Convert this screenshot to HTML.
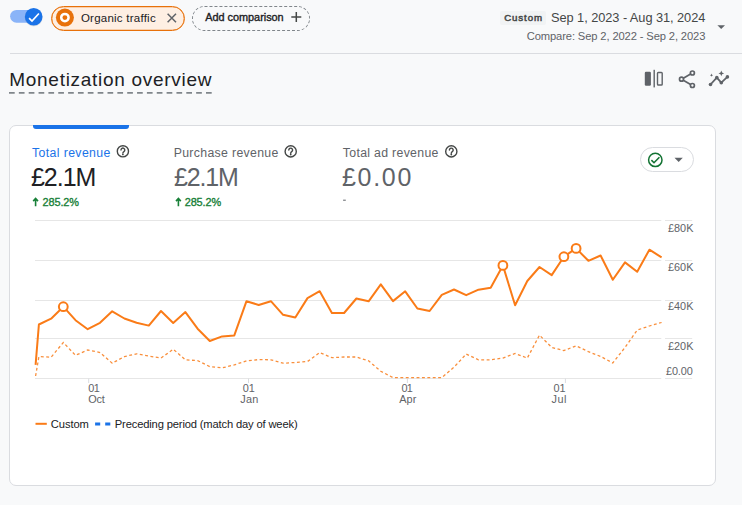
<!DOCTYPE html>
<html><head><meta charset="utf-8"><title>Monetization overview</title>
<style>
html,body{margin:0;padding:0}
body{width:742px;height:505px;overflow:hidden;position:relative;background:#f8f9fa;font-family:"Liberation Sans",sans-serif}
.t{position:absolute;white-space:nowrap;line-height:1;display:block}
.ov{position:absolute;left:0;top:0}
.chip{position:absolute;left:51px;top:6px;width:134px;height:25px;border:1px solid #e8710a;border-radius:13px;background:#feefe3;box-sizing:border-box;box-shadow:inset 0 0 0 .3px #e8710a}
.add{position:absolute;left:192px;top:6px;width:118px;height:25px;border:1px dashed #80868b;border-radius:13px;box-sizing:border-box}
.cus{position:absolute;left:500px;top:10.9px;width:46px;height:14px;background:#f1f3f4;border-radius:2px}
.hr{position:absolute;left:10px;top:53px;width:732px;height:1px;background:#dadce0}
.card{position:absolute;left:9px;top:125px;width:705px;height:359px;border:1px solid #dadce0;border-radius:7px;background:#fff}
.tab{position:absolute;left:32.7px;top:125.2px;width:96.7px;height:3.7px;background:#1a73e8;border-radius:0 0 3px 3px}
.pill{position:absolute;left:640px;top:147px;width:54px;height:25px;border:1px solid #dadce0;border-radius:13px;background:#fff;box-sizing:border-box}
</style></head><body>
<div class="chip"></div>
<div class="add"></div>
<div class="cus"></div>
<div class="hr"></div>
<div class="card"></div>
<div class="tab"></div>
<div class="pill"></div>
<svg class="ov" width="742" height="505" viewBox="0 0 742 505">
<!-- toggle -->
<rect x="10.1" y="9.9" width="30" height="12.8" rx="6.4" fill="#8ab4f8"/>
<circle cx="33.7" cy="17.4" r="9" fill="#000" opacity=".10"/>
<circle cx="33.7" cy="16.8" r="8.8" fill="#1a73e8"/>
<path d="M29.1 18.1L32 21.1L38.9 13.5" fill="none" stroke="#fff" stroke-width="1.7"/>
<!-- chip icon -->
<circle cx="64.9" cy="17.6" r="9" fill="#e8710a"/>
<circle cx="64.9" cy="17.6" r="3.7" fill="none" stroke="#fff" stroke-width="2.5"/>
<path d="M167.6 13.8L176 22.2M176 13.8L167.6 22.2" stroke="#5f6368" stroke-width="1.5" fill="none"/>
<!-- plus -->
<path d="M291.3 16.9H301.3M296.3 11.9V21.9" stroke="#444746" stroke-width="1.5" fill="none"/>
<!-- date dropdown -->
<path d="M717.4 25.2H725L721.2 29z" fill="#5f6368"/>
<!-- title underline -->
<path d="M9 92.9H211.7" stroke="#80868b" stroke-width="1.8" stroke-dasharray="5.7 4.15" fill="none"/>
<!-- compare icon -->
<rect x="644.8" y="71.8" width="6.1" height="13.9" rx="1.2" fill="#5f6368"/>
<rect x="653.5" y="69.8" width="1.4" height="17.6" fill="#5f6368"/>
<rect x="657.5" y="72.5" width="4.7" height="12.5" rx=".8" fill="none" stroke="#5f6368" stroke-width="1.4"/>
<!-- share icon -->
<g stroke="#5f6368" stroke-width="1.7" fill="none">
<path d="M683.3 78.2L690.6 74M683.3 80.2L690.6 84.4"/>
<circle cx="692.4" cy="73" r="2"/><circle cx="681.5" cy="79.2" r="2"/><circle cx="692.4" cy="85.5" r="2"/>
</g>
<!-- insights icon -->
<g stroke="#5f6368" stroke-width="1.8" fill="none" stroke-linejoin="round">
<path d="M710.5 84.5L716.8 77.6L721.3 82.7L727.4 76.9"/>
</g>
<g fill="#5f6368">
<circle cx="710.5" cy="84.5" r="1.8"/><circle cx="716.8" cy="77.6" r="1.8"/><circle cx="721.3" cy="82.7" r="1.8"/><circle cx="727.4" cy="76.9" r="1.8"/>
<path d="M721.3 70.6l.8 2 2 .8-2 .8-.8 2-.8-2-2-.8 2-.8z"/>
<path d="M711.5 73.6l.5 1.1 1.1.5-1.1.5-.5 1.1-.5-1.1-1.1-.5 1.1-.5z"/>
</g>
<!-- help icons -->
<g stroke="#444746" fill="none" stroke-width="1.4" stroke-linecap="round"><circle cx="122.9" cy="151.3" r="5.6"/><path d="M121.0 150.0a1.9 1.9 0 1 1 2.9 1.6q-1 .6-1 1.5"/></g><circle cx="122.9" cy="154.4" r=".9" fill="#444746"/>
<g stroke="#444746" fill="none" stroke-width="1.4" stroke-linecap="round"><circle cx="290.7" cy="151.4" r="5.6"/><path d="M288.8 150.1a1.9 1.9 0 1 1 2.9 1.6q-1 .6-1 1.5"/></g><circle cx="290.7" cy="154.5" r=".9" fill="#444746"/>
<g stroke="#444746" fill="none" stroke-width="1.4" stroke-linecap="round"><circle cx="451.3" cy="151.4" r="5.6"/><path d="M449.40000000000003 150.1a1.9 1.9 0 1 1 2.9 1.6q-1 .6-1 1.5"/></g><circle cx="451.3" cy="154.5" r=".9" fill="#444746"/>
<path d="M35.6 206.2V198.6M33.2 201.1L35.6 198.5L38.0 201.1" stroke="#188038" stroke-width="1.6" fill="none"/>
<path d="M178.4 206.2V198.6M176.0 201.1L178.4 198.5L180.8 201.1" stroke="#188038" stroke-width="1.6" fill="none"/>
<path d="M343.1 200.2H345.8" stroke="#5f6368" stroke-width="1"/>
<!-- status pill -->
<circle cx="655.3" cy="159.9" r="6.7" fill="none" stroke="#137333" stroke-width="1.5"/>
<path d="M651.4 160.1L654 162.7L659.4 157.2" fill="none" stroke="#137333" stroke-width="1.6"/>
<path d="M674.5 157.8H682.8L678.65 162z" fill="#5f6368"/>
<!-- chart -->
<g stroke="#e6e6e6" stroke-width="1" fill="none"><path d="M35 220.5H661.3M665 220.5H692.2"/><path d="M35 260.5H661.3M665 260.5H692.2"/><path d="M35 300.5H661.3M665 300.5H692.2"/><path d="M35 338.5H661.3M665 338.5H692.2"/><path d="M35 378.5H661.3M665 378.5H692.2"/></g>
<g stroke="#dadce0" stroke-width="1" fill="none"><path d="M88.7 378.5V383"/><path d="M248.5 378.5V383"/><path d="M407.4 378.5V383"/><path d="M565.4 378.5V383"/></g>
<polyline points="35.6,376.0 38.9,356.6 51.1,357.2 63.3,342.5 75.5,355.3 87.7,350.0 100.0,352.5 112.2,363.2 124.4,356.6 136.6,353.8 148.8,356.0 161.0,358.1 173.2,349.2 185.4,359.8 197.6,360.6 209.8,366.6 222.1,367.9 234.3,364.9 246.5,360.8 258.7,359.6 270.9,359.8 283.1,363.2 295.3,362.5 307.5,361.5 319.7,352.6 331.9,357.7 344.1,357.0 356.4,357.0 368.6,360.8 380.8,371.3 393.0,377.6 405.2,377.6 417.4,377.6 429.6,377.6 441.8,377.6 454.0,367.2 466.2,354.0 478.5,359.8 490.7,359.8 502.9,358.0 515.1,353.5 527.3,358.1 539.5,335.1 551.7,347.4 563.9,350.6 576.1,345.8 588.4,351.7 600.6,356.4 612.8,363.0 625.0,347.5 637.2,330.1 649.4,326.0 661.6,322.5" fill="none" stroke="#f98f3c" stroke-width="1.3" stroke-dasharray="2.9 2.5"/>
<polyline points="35.6,364.9 38.9,324.5 51.1,318.7 63.3,306.7 75.5,320.2 87.7,329.2 100.0,322.8 112.2,311.3 124.4,318.5 136.6,322.8 148.8,325.6 161.0,311.0 173.2,323.0 185.4,312.1 197.6,328.7 209.8,341.0 222.1,336.4 234.3,335.4 246.5,301.2 258.7,305.0 270.9,301.2 283.1,314.8 295.3,317.5 307.5,298.1 319.7,291.2 331.9,313.0 344.1,313.0 356.4,298.5 368.6,301.3 380.8,284.3 393.0,301.1 405.2,291.3 417.4,308.5 429.6,311.0 441.8,294.8 454.0,289.5 466.2,295.2 478.5,289.7 490.7,287.7 502.9,265.4 515.1,305.3 527.3,281.0 539.5,267.0 551.7,275.1 563.9,256.7 576.1,248.4 588.4,260.8 600.6,255.5 612.8,279.8 625.0,262.4 637.2,271.8 649.4,249.7 661.6,257.4" fill="none" stroke="#fa7b17" stroke-width="2" stroke-linejoin="round"/>
<g fill="#fff" stroke="#fa7b17" stroke-width="2"><circle cx="63.3" cy="306.7" r="4.4"/><circle cx="502.9" cy="265.4" r="4.4"/><circle cx="563.9" cy="256.7" r="4.4"/><circle cx="576.1" cy="248.4" r="4.4"/></g>
<!-- legend -->
<path d="M35.5 423.8H46.8" stroke="#fa7b17" stroke-width="2"/>
<path d="M95.1 423.9H100.2M105.2 423.9H110.3" stroke="#1a73e8" stroke-width="3"/>
</svg>
<span class="t" style="left:80.90px;top:13.00px;font-size:11.5px;color:#202124;letter-spacing:0.243px">Organic traffic</span>
<span class="t" style="left:205.25px;top:12.00px;font-size:10.9px;color:#202124;letter-spacing:-0.023px;-webkit-text-stroke:.35px currentColor">Add comparison</span>
<span class="t" style="left:504.15px;top:13.00px;font-size:9.7px;color:#444746;letter-spacing:0.910px;-webkit-text-stroke:.5px currentColor">Custom</span>
<span class="t" style="left:551.05px;top:12.00px;font-size:12.8px;color:#444746;letter-spacing:-0.062px">Sep 1, 2023 - Aug 31, 2024</span>
<span class="t" style="left:526.80px;top:31.00px;font-size:11.2px;color:#5f6368;letter-spacing:-0.130px">Compare: Sep 2, 2022 - Sep 2, 2023</span>
<span class="t" style="left:9.30px;top:70.00px;font-size:19.0px;color:#202124;letter-spacing:0.705px">Monetization overview</span>
<span class="t" style="left:32.05px;top:147.00px;font-size:12.3px;color:#1a73e8;letter-spacing:0.375px">Total revenue</span>
<span class="t" style="left:30.95px;top:165.00px;font-size:25.0px;color:#202124;letter-spacing:-1.012px">£2.1M</span>
<span class="t" style="left:42.50px;top:197.00px;font-size:10.9px;color:#188038;letter-spacing:-0.090px;-webkit-text-stroke:.35px currentColor">285.2%</span>
<span class="t" style="left:173.70px;top:147.00px;font-size:12.3px;color:#5f6368;letter-spacing:0.323px">Purchase revenue</span>
<span class="t" style="left:173.95px;top:165.00px;font-size:25.0px;color:#5f6368;letter-spacing:-1.162px">£2.1M</span>
<span class="t" style="left:184.70px;top:197.00px;font-size:10.9px;color:#188038;letter-spacing:-0.090px;-webkit-text-stroke:.35px currentColor">285.2%</span>
<span class="t" style="left:342.85px;top:147.00px;font-size:12.3px;color:#5f6368;letter-spacing:0.307px">Total ad revenue</span>
<span class="t" style="left:341.95px;top:165.00px;font-size:25.0px;color:#5f6368;letter-spacing:1.713px">£0.00</span>
<span class="t" style="left:667.95px;top:223.00px;font-size:10.9px;color:#5f6368;letter-spacing:0.033px">£80K</span>
<span class="t" style="left:667.95px;top:262.00px;font-size:10.9px;color:#5f6368;letter-spacing:0.033px">£60K</span>
<span class="t" style="left:667.95px;top:301.00px;font-size:10.9px;color:#5f6368;letter-spacing:0.033px">£40K</span>
<span class="t" style="left:667.95px;top:341.00px;font-size:10.9px;color:#5f6368;letter-spacing:0.033px">£20K</span>
<span class="t" style="left:666.05px;top:366.00px;font-size:10.9px;color:#5f6368;letter-spacing:-0.150px">£0.00</span>
<span class="t" style="left:88.20px;top:383.00px;font-size:10.9px;color:#5f6368;letter-spacing:-0.600px">01</span>
<span class="t" style="left:88.20px;top:394.00px;font-size:10.9px;color:#5f6368;letter-spacing:-0.150px">Oct</span>
<span class="t" style="left:242.80px;top:383.00px;font-size:10.9px;color:#5f6368;letter-spacing:-0.200px">01</span>
<span class="t" style="left:240.35px;top:394.00px;font-size:10.9px;color:#5f6368;letter-spacing:0.200px">Jan</span>
<span class="t" style="left:401.50px;top:383.00px;font-size:10.9px;color:#5f6368;letter-spacing:-0.700px">01</span>
<span class="t" style="left:399.30px;top:394.00px;font-size:10.9px;color:#5f6368;letter-spacing:0.025px">Apr</span>
<span class="t" style="left:553.50px;top:383.00px;font-size:10.9px;color:#5f6368;letter-spacing:0.000px">01</span>
<span class="t" style="left:551.45px;top:394.00px;font-size:10.9px;color:#5f6368;letter-spacing:0.500px">Jul</span>
<span class="t" style="left:50.80px;top:419.00px;font-size:11.2px;color:#202124;letter-spacing:-0.090px">Custom</span>
<span class="t" style="left:114.80px;top:419.00px;font-size:11.2px;color:#202124;letter-spacing:-0.159px">Preceding period (match day of week)</span>
</body></html>
